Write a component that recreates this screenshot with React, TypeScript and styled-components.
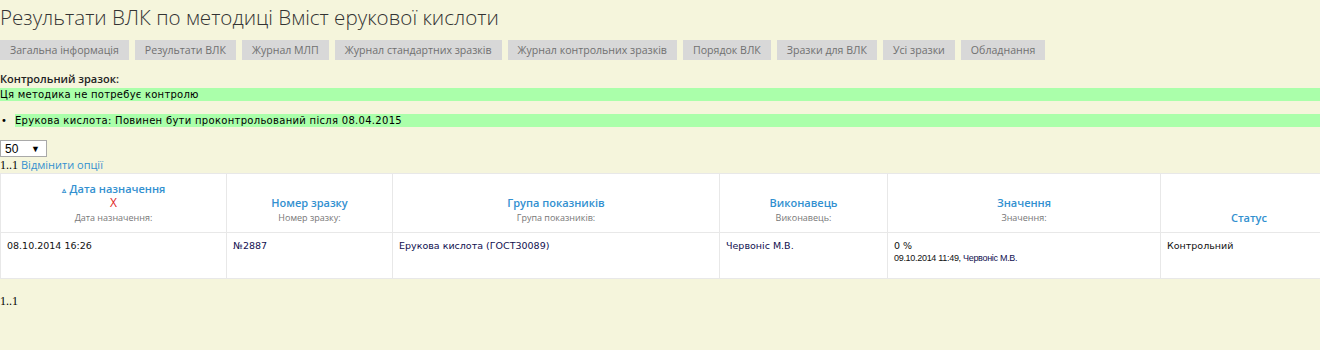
import styled, { createGlobalStyle } from "styled-components";

const GlobalStyle = createGlobalStyle`
  body {
    margin: 0;
    background: #f5f5dc;
    font-family: "DejaVu Sans", Verdana, sans-serif;
    color: #000;
  }
`;

const Page = styled.div`
  display: flex;
  flex-direction: column;
`;

const Title = styled.h1`
  margin: 4px 0 0;
  font-family: "Open Sans", sans-serif;
  font-weight: 300;
  font-size: 20.6px;
  line-height: 26px;
  color: #333;
`;

const Nav = styled.div`
  display: flex;
  gap: 6px;
  margin-top: 10px;
`;

const NavButton = styled.a`
  display: block;
  height: 20px;
  line-height: 20px;
  padding: 0 10px;
  background: #d8d8d8;
  font-family: "Open Sans", sans-serif;
  font-size: 10.6px;
  color: #707070;
  white-space: nowrap;
`;

const Label = styled.div`
  margin: 12px 0 2px;
  font-family: "Open Sans", sans-serif;
  font-weight: 600;
  font-size: 11px;
  line-height: 14px;
  color: #222;
`;

const GreenBar = styled.div`
  background: #aaffaa;
  font-size: 10px;
  line-height: 13px;
  letter-spacing: 0.25px;
`;

const List = styled.ul`
  margin: 13px 0 0;
  padding: 0;
  list-style: none;
`;

const ListItem = styled.li`
  display: flex;
  align-items: center;
  font-size: 10px;
  line-height: 13px;
  letter-spacing: 0.3px;

  &::before {
    content: "•";
    width: 15px;
    padding-left: 1px;
    box-sizing: border-box;
  }
`;

const ListText = styled.span`
  flex: 1;
  background: #aaffaa;
`;

const Select = styled.div`
  margin-top: 13px;
  width: 47px;
  height: 17px;
  box-sizing: border-box;
  border: 1px solid #a9a9a9;
  background: #fff;
  display: flex;
  align-items: center;
  justify-content: space-between;
  padding: 0 6px 0 4px;
  font-family: "Liberation Sans", Arial, sans-serif;
  font-size: 12px;
`;

const Arrow = styled.span`
  font-size: 9px;
`;

const Pager = styled.div`
  font-family: "Liberation Serif", serif;
  font-size: 12px;
  line-height: 16px;
`;

const Link = styled.a`
  font-family: "Open Sans", sans-serif;
  font-size: 11px;
  color: #3290d0;
`;

const Table = styled.table`
  width: 1336px;
  border-collapse: collapse;
  background: #fff;
  table-layout: fixed;
`;

const HeadRow = styled.tr`
  height: 59px;
`;

const BodyRow = styled.tr`
  height: 46px;
`;

const Th = styled.th<{ $w: number }>`
  width: ${(p) => p.$w}px;
  border: 1px solid #e8e8e8;
  text-align: center;
  vertical-align: bottom;
  padding: 0 0 8px;
  font-weight: normal;
`;

const HeadLink = styled.a`
  display: block;
  font-family: "Open Sans", sans-serif;
  font-weight: 600;
  font-size: 11px;
  line-height: 13px;
  color: #3290d0;
`;

const SortMark = styled.span`
  font-size: 8px;
  margin-right: 4px;
`;

const Remove = styled.div`
  font-family: "Open Sans", sans-serif;
  color: #e0271f;
  font-size: 12px;
  line-height: 13px;
`;

const SubLabel = styled.div`
  margin-top: 3px;
  font-family: "Open Sans", sans-serif;
  font-size: 9px;
  line-height: 12px;
  color: #777;
`;

const Td = styled.td`
  border: 1px solid #e8e8e8;
  vertical-align: top;
  padding: 6px 6px 0;
  font-size: 9.5px;
  line-height: 13px;
  color: #111;
`;

const Dark = styled.span`
  color: #101050;
`;

const Small = styled.div`
  font-family: "Liberation Sans", Arial, sans-serif;
  font-size: 9px;
  letter-spacing: -0.3px;
  line-height: 12px;
`;

const Footer = styled.div`
  margin-top: 15px;
  font-family: "Liberation Serif", serif;
  font-size: 12px;
`;

const tabs = [
  "Загальна інформація",
  "Результати ВЛК",
  "Журнал МЛП",
  "Журнал стандартних зразків",
  "Журнал контрольних зразків",
  "Порядок ВЛК",
  "Зразки для ВЛК",
  "Усі зразки",
  "Обладнання",
];

const columns = [
  { title: "Дата назначення", sub: "Дата назначення:", w: 225, sorted: true },
  { title: "Номер зразку", sub: "Номер зразку:", w: 165 },
  { title: "Група показників", sub: "Група показників:", w: 326 },
  { title: "Виконавець", sub: "Виконавець:", w: 167 },
  { title: "Значення", sub: "Значення:", w: 272 },
  { title: "Статус", w: 176 },
];

export default function App() {
  return (
    <Page>
      <GlobalStyle />
      <Title>Результати ВЛК по методиці Вміст ерукової кислоти</Title>
      <Nav>
        {tabs.map((t) => (
          <NavButton key={t}>{t}</NavButton>
        ))}
      </Nav>
      <Label>Контрольний зразок:</Label>
      <GreenBar>Ця методика не потребує контролю</GreenBar>
      <List>
        <ListItem>
          <ListText>Ерукова кислота: Повинен бути проконтрольований після 08.04.2015</ListText>
        </ListItem>
      </List>
      <Select>
        <span>50</span>
        <Arrow>▼</Arrow>
      </Select>
      <Pager>
        1..1 <Link>Відмінити опції</Link>
      </Pager>
      <Table>
        <thead>
          <HeadRow>
            {columns.map((c) => (
              <Th key={c.title} $w={c.w}>
                <HeadLink>
                  {c.sorted && <SortMark>▵</SortMark>}
                  {c.title}
                </HeadLink>
                {c.sorted && <Remove>X</Remove>}
                {c.sub && <SubLabel>{c.sub}</SubLabel>}
              </Th>
            ))}
          </HeadRow>
        </thead>
        <tbody>
          <BodyRow>
            <Td>08.10.2014 16:26</Td>
            <Td>
              <Dark>№2887</Dark>
            </Td>
            <Td>
              <Dark>Ерукова кислота (ГОСТ30089)</Dark>
            </Td>
            <Td>
              <Dark>Червоніс М.В.</Dark>
            </Td>
            <Td>
              0 %
              <Small>
                09.10.2014 11:49, <Dark>Червоніс М.В.</Dark>
              </Small>
            </Td>
            <Td>Контрольний</Td>
          </BodyRow>
        </tbody>
      </Table>
      <Footer>1..1</Footer>
    </Page>
  );
}
